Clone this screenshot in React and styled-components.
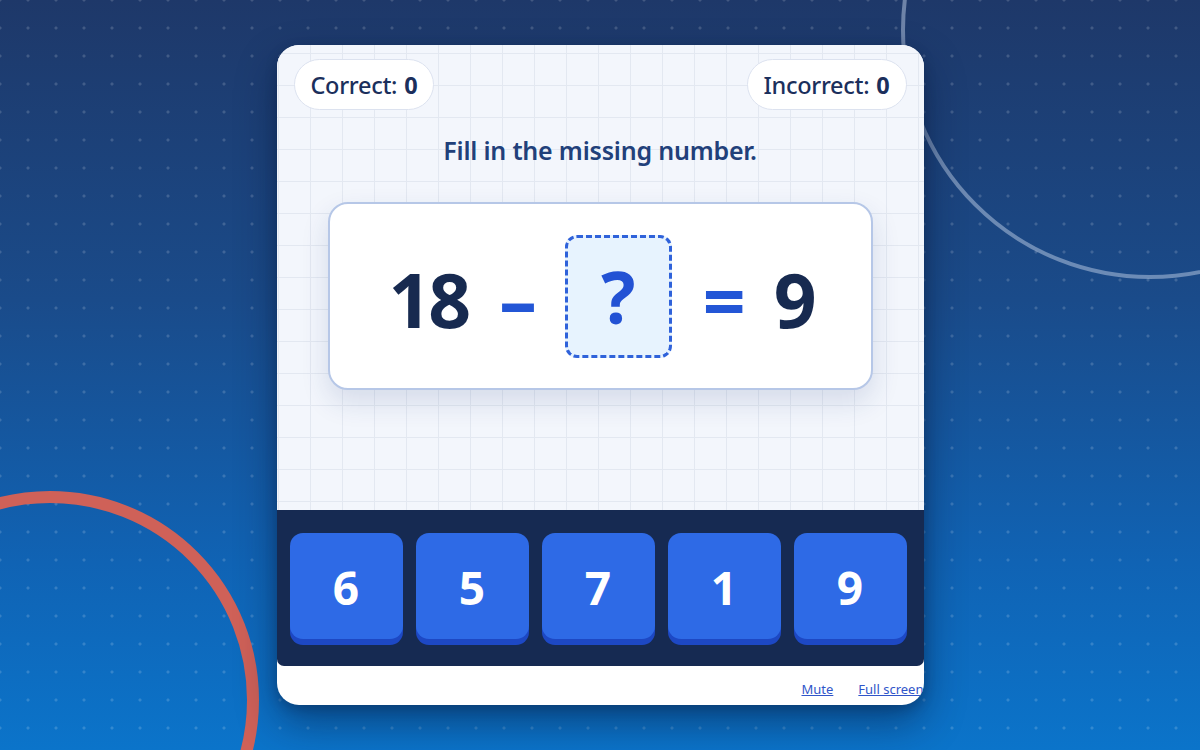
import styled, { createGlobalStyle } from "styled-components";

const GlobalStyle = createGlobalStyle`
  html, body {
    margin: 0;
    padding: 0;
  }
  body {
    font-family: "Noto Sans", "Open Sans", sans-serif;
  }
`;

const Page = styled.div`
  position: relative;
  width: 100vw;
  height: 100vh;
  overflow: hidden;
  display: flex;
  align-items: center;
  justify-content: center;
  background:
    radial-gradient(circle, rgba(255, 255, 255, 0.16) 1.3px, transparent 1.8px) 14px 14px / 28px 28px,
    linear-gradient(180deg, #1e3869 0%, #1a4b8a 40%, #1063b4 75%, #0b74ca 100%);
`;

const Decor = styled.svg`
  position: absolute;
  inset: 0;
  width: 100%;
  height: 100%;
  pointer-events: none;
`;

const Card = styled.div`
  position: relative;
  width: 647px;
  height: 660px;
  border-radius: 22px;
  overflow: hidden;
  background: #ffffff;
  display: flex;
  flex-direction: column;
  box-shadow: 0 18px 40px rgba(6, 20, 50, 0.45), 0 4px 12px rgba(6, 20, 50, 0.25);
`;

const Board = styled.div`
  height: 465px;
  flex: none;
  display: flex;
  flex-direction: column;
  align-items: center;
  background-color: #f3f6fc;
  background-image:
    linear-gradient(to right, #e3e8f1 1px, transparent 1px),
    linear-gradient(to bottom, #e3e8f1 1px, transparent 1px);
  background-size: 32px 32px;
  background-position: 1px 8px;
`;

const ScoreRow = styled.div`
  align-self: stretch;
  display: flex;
  justify-content: space-between;
  padding: 14px 17px 0 17px;
`;

const Pill = styled.div`
  height: 51px;
  box-sizing: border-box;
  padding: 0 16px;
  display: flex;
  align-items: center;
  border-radius: 26px;
  background: #ffffff;
  border: 1px solid #dce2ef;
  color: #1b2f5c;
  font-size: 23.5px;
  font-weight: 500;
  letter-spacing: -0.3px;

  b {
    font-weight: 700;
    margin-left: 7px;
  }
`;

const Prompt = styled.h2`
  margin: 24px 0 0 0;
  font-size: 25px;
  line-height: 32px;
  font-weight: 600;
  color: #21407a;
  letter-spacing: -0.2px;
`;

const EquationBox = styled.div`
  margin-top: 36px;
  width: 545px;
  height: 188px;
  box-sizing: border-box;
  border: 2px solid #b6c7e7;
  border-radius: 20px;
  background: #ffffff;
  box-shadow: 0 12px 28px rgba(30, 60, 120, 0.14);
  display: flex;
  align-items: center;
  justify-content: center;
  gap: 31px;
  padding-left: 2px;
`;

const Term = styled.span`
  font-size: 75px;
  line-height: 1;
  font-weight: 700;
  color: ${(p) => (p.$op ? "#2356d6" : "#172a50")};
  letter-spacing: -3px;
  margin-top: 6px;
`;

const Blank = styled.div`
  width: 107px;
  height: 123px;
  box-sizing: border-box;
  border: 3px dashed #2f62da;
  border-radius: 12px;
  background: #e7f3fe;
  display: flex;
  align-items: center;
  justify-content: center;
  font-size: 72px;
  font-weight: 700;
  color: #2352d4;
`;

const AnswerBar = styled.div`
  height: 156px;
  flex: none;
  box-sizing: border-box;
  background: #162a52;
  border-radius: 0 0 7px 7px;
  padding: 23px 17px 0 13px;
  display: flex;
  gap: 13px;
`;

const AnswerButton = styled.button`
  width: 113px;
  height: 106px;
  border: none;
  border-radius: 13px;
  background: #2e6ae6;
  box-shadow: 0 6px 0 #1d48c4;
  color: #ffffff;
  font-family: "Noto Sans", "Open Sans", sans-serif;
  font-size: 46px;
  font-weight: 700;
  display: flex;
  align-items: center;
  justify-content: center;
  padding: 2px 0 0 0;
  cursor: pointer;
`;

const Footer = styled.div`
  flex: 1;
  display: flex;
  justify-content: flex-end;
  align-items: flex-end;
  gap: 25px;
  padding: 0 0 7px 0;
`;

const FooterLink = styled.a`
  font-size: 13px;
  color: #3055c9;
  text-decoration: underline;
  cursor: pointer;
  white-space: nowrap;
`;

const answers = [6, 5, 7, 1, 9];

export default function App() {
  return (
    <>
      <GlobalStyle />
      <Page>
        <Decor viewBox="0 0 1200 750" preserveAspectRatio="none">
          <circle cx="1150" cy="30" r="247" fill="none" stroke="rgba(190,205,230,0.5)" strokeWidth="4" />
          <circle cx="50" cy="700" r="203" fill="none" stroke="#cf6158" strokeWidth="12" />
        </Decor>
        <Card>
          <Board>
            <ScoreRow>
              <Pill>
                Correct: <b>0</b>
              </Pill>
              <Pill>
                Incorrect: <b>0</b>
              </Pill>
            </ScoreRow>
            <Prompt>Fill in the missing number.</Prompt>
            <EquationBox>
              <Term>18</Term>
              <Term $op>–</Term>
              <Blank>?</Blank>
              <Term $op>=</Term>
              <Term>9</Term>
            </EquationBox>
          </Board>
          <AnswerBar>
            {answers.map((n) => (
              <AnswerButton key={n}>{n}</AnswerButton>
            ))}
          </AnswerBar>
          <Footer>
            <FooterLink>Mute</FooterLink>
            <FooterLink>Full screen</FooterLink>
          </Footer>
        </Card>
      </Page>
    </>
  );
}
